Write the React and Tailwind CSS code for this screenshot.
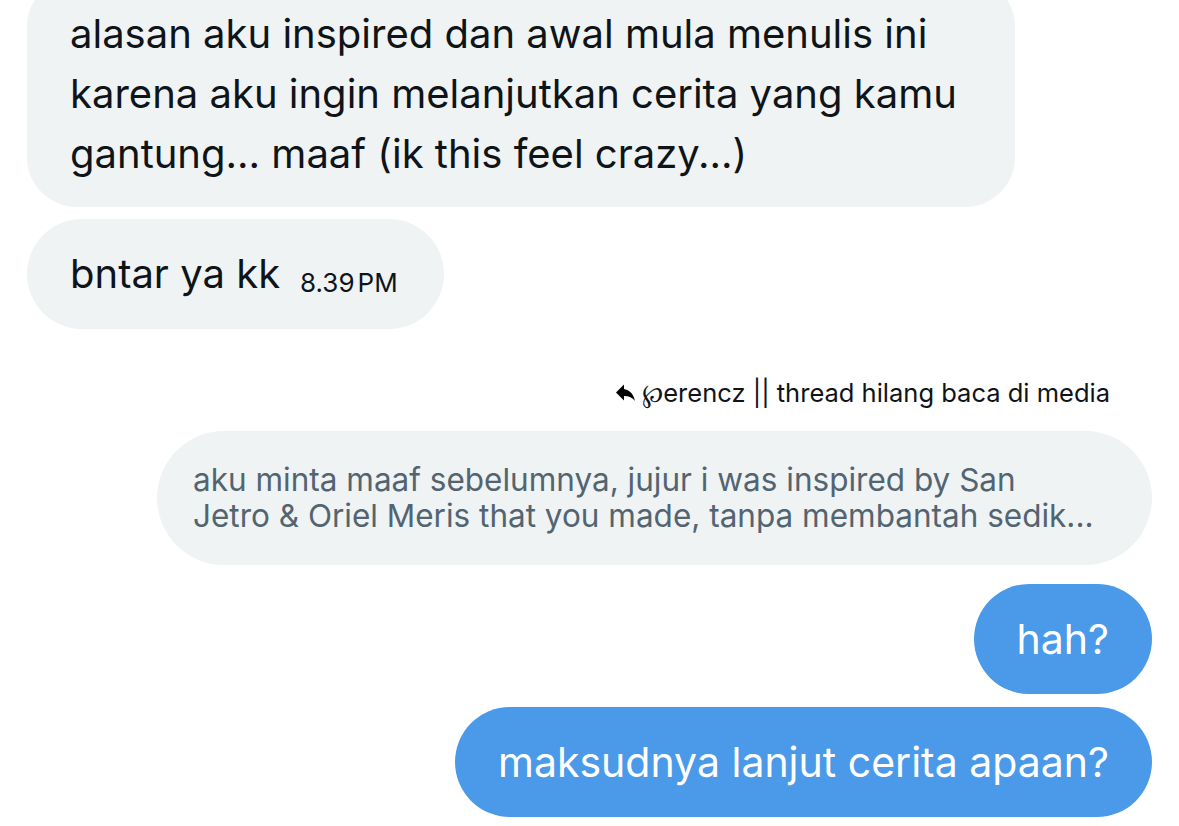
import React from "react";

function ReplyIcon() {
  return (
    <svg viewBox="0 0 24 24" className="w-[24px] h-[24px] fill-black">
      <path d="M10 8V3.5L2 11.5l8 8V15c5 0 8.5 1.6 11 5.1-1-5-4-11-11-12.1z" />
    </svg>
  );
}

export default function App() {
  return (
    <div
      className="w-[1179px] h-[826px] overflow-hidden bg-white px-[27px]"
      style={{ fontFamily: "Inter, 'Noto Sans', sans-serif" }}
    >
      <div className="flex flex-col items-start">
        {/* incoming */}
        <div className="-mt-[23px] w-[988px] rounded-[50px] bg-[#eff3f4] pl-[43px] pr-[30px] pt-[27px] pb-[23px] text-[40px] leading-[60px] text-[#0f1419]">
          <div>alasan aku inspired dan awal mula menulis ini</div>
          <div>karena aku ingin melanjutkan cerita yang kamu</div>
          <div>gantung... maaf (ik this feel crazy...)</div>
        </div>
        <div className="mt-[12px] flex h-[110px] items-center rounded-full bg-[#eff3f4] pl-[43px] pr-[46px] text-[#0f1419]">
          <span className="text-[40px]">bntar ya kk</span>
          <span className="ml-[20px] mt-[16px] text-[26px]">
            8.39<span className="ml-[3px]">PM</span>
          </span>
        </div>
      </div>

      {/* reply context */}
      <div className="mt-[45px] flex items-center justify-end gap-[4px] pr-[42px] text-[25.5px] text-[#0f1419]">
        <ReplyIcon />
        <span>℘erencz || thread hilang baca di media</span>
      </div>

      <div className="mt-[19px] flex flex-col items-end">
        <div className="w-[995px] rounded-[67px] bg-[#eff3f4] pl-[36px] pr-[30px] py-[31px] text-[31.5px] leading-[36px] text-[#536471]">
          <div>aku minta maaf sebelumnya, jujur i was inspired by San</div>
          <div>Jetro &amp; Oriel Meris that you made, tanpa membantah sedik...</div>
        </div>
        <div className="mt-[19px] flex h-[110px] items-center rounded-full bg-[#4b99e9] px-[43px] text-[41px] text-white">
          hah?
        </div>
        <div className="mt-[13px] flex h-[110px] items-center rounded-full bg-[#4b99e9] px-[43px] text-[41px] text-white">
          maksudnya lanjut cerita apaan?
        </div>
      </div>
    </div>
  );
}
